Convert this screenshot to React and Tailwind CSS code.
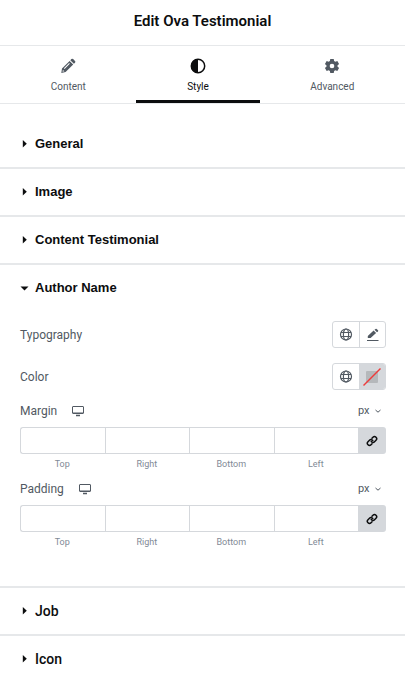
import React, { useState } from "react";

const PencilIcon = () => (
  <svg className="w-4 h-4" viewBox="0 0 16 16" fill="currentColor">
    <path
      fillRule="evenodd"
      d="M2 10.500 9.600 2.900l3.600 3.600-7.600 7.600-4.300.8zM4.600 10.900l5.200-5.200-.7-.7-5.200 5.200zM2.900 11.900l-.4 1.800 1.900-.4z"
    />
    <path d="M10.300 2.200 11.400 1.100a1.200 1.200 0 0 1 1.700 0l1.900 1.900a1.200 1.200 0 0 1 0 1.700l-1.100 1.100z" />
  </svg>
);

const SettingsIcon = () => (
  <svg className="w-4 h-4" viewBox="0 0 24 24" fill="currentColor">
    <path
      fillRule="evenodd"
      d="M9.400 1.500h5.200l.6 3.100 1.800 1 3-1 2.600 4.500-2.400 2v1.800l2.400 2-2.600 4.500-3-1-1.800 1-.6 3.100H9.400l-.6-3.100-1.800-1-3 1-2.600-4.500 2.400-2v-1.800l-2.400-2L4 4.600l3 1 1.800-1zM12 8.500a3.500 3.500 0 1 0 0 7 3.500 3.500 0 0 0 0-7z"
    />
  </svg>
);

const ContrastIcon = () => (
  <svg className="w-4 h-4" viewBox="0 0 16 16">
    <circle cx="8" cy="8" r="6.700" fill="none" stroke="currentColor" strokeWidth="1.500" />
    <path d="M8 1a7 7 0 0 0 0 14z" fill="currentColor" />
  </svg>
);

const GlobeIcon = () => (
  <svg className="w-3.5 h-3.5" viewBox="0 0 14 14" fill="none" stroke="currentColor" strokeWidth="1.200">
    <circle cx="7" cy="6.500" r="5.500" />
    <ellipse cx="7" cy="6.500" rx="2.600" ry="5.500" />
    <path d="M2 4.500h10M2 8.500h10" />
  </svg>
);

const EditIcon = () => (
  <svg className="w-3.5 h-3.5" viewBox="0 0 14 14" fill="currentColor">
    <path d="M1.800 8 7.600 2.600l2.500 2.500-5.500 5H1.800zM8.500 1.800l1-.9a.9.900 0 0 1 1.200 0l1.300 1.300a.9.900 0 0 1 0 1.200l-1 .9z" />
    <path d="M1 12h11.500v1H1z" />
  </svg>
);

const DesktopIcon = () => (
  <svg className="w-3 h-3" viewBox="0 0 12 12" fill="none" stroke="currentColor">
    <rect x=".5" y="1.500" width="11" height="7" rx=".5" />
    <path d="M1 8.200h10M4 10.500h4" strokeWidth="1.400" />
  </svg>
);

const LinkIcon = () => (
  <svg className="w-3 h-3" viewBox="0 0 24 24" fill="none" stroke="currentColor" strokeWidth="3" strokeLinecap="round" strokeLinejoin="round">
    <path d="M10.500 13a4.300 4.300 0 0 0 6.500.5l3-3a4.300 4.300 0 0 0-6.100-6.100l-2 2" />
    <path d="M13.500 11a4.300 4.300 0 0 0-6.500-.5l-3 3a4.300 4.300 0 0 0 6.100 6.100l2-2" />
  </svg>
);

const TABS = [
  { id: "content", label: "Content", icon: <PencilIcon /> },
  { id: "style", label: "Style", icon: <ContrastIcon /> },
  { id: "advanced", label: "Advanced", icon: <SettingsIcon /> },
];

const SIDES = ["Top", "Right", "Bottom", "Left"];

const Section = ({ title, open, onToggle, titleClass, children }) => (
  <section className="border-b-2 border-[#e6e8ea] last:border-b-0">
    <h2>
      <button
        type="button"
        onClick={onToggle}
        aria-expanded={open}
        className="flex w-full h-[46px] items-center gap-1.5 px-5 text-left text-[#0c0d0e] cursor-pointer"
      >
        <svg className="w-[9px] h-[9px]" viewBox="0 0 9 9" fill="currentColor">
          {open ? <path d="M.5 2.500h8l-4 4z" /> : <path d="M2.800 0v7.500l4-3.750z" />}
        </svg>
        <span className={titleClass}>{title}</span>
      </button>
    </h2>
    {open && children}
  </section>
);

const ControlRow = ({ label, action }) => (
  <div className="flex items-center justify-between">
    <span className="text-xs">{label}</span>
    <div className="flex h-[27px] rounded-[3px] border border-[#d5d8dc] overflow-hidden">
      <button type="button" aria-label={`${label} globals`} className="flex w-[26px] items-center justify-center cursor-pointer">
        <GlobeIcon />
      </button>
      {action}
    </div>
  </div>
);

const Dimensions = ({ label }) => {
  const [linked, setLinked] = useState(true);
  const [values, setValues] = useState({ Top: "", Right: "", Bottom: "", Left: "" });
  const name = label.toLowerCase();

  const handleChange = (side, value) => {
    if (linked) {
      setValues({ Top: value, Right: value, Bottom: value, Left: value });
    } else {
      setValues({ ...values, [side]: value });
    }
  };

  return (
    <div>
      <div className="flex h-4 items-center justify-between">
        <div className="flex items-center gap-[15px]">
          <span className="text-xs">{label}</span>
          <button type="button" aria-label={`${label} device`} className="cursor-pointer">
            <DesktopIcon />
          </button>
        </div>
        <div className="relative flex items-center mr-1">
          <select aria-label={`${label} unit`} className="w-6 appearance-none bg-transparent text-[11px] leading-4 outline-none">
            <option>px</option>
            <option>em</option>
            <option>%</option>
          </select>
          <svg className="absolute right-0 w-2 h-2 pointer-events-none" viewBox="0 0 8 8" fill="none" stroke="currentColor">
            <path d="M1.500 3 4 5.200 6.500 3" />
          </svg>
        </div>
      </div>

      <div className="mt-2 flex">
        {SIDES.map((side) => (
          <div key={side} className="flex-1 min-w-0 group">
            <input
              id={`${name}-${side}`}
              type="text"
              value={values[side]}
              onChange={(e) => handleChange(side, e.target.value)}
              className="block w-full h-[27px] border border-r-0 border-[#d5d8dc] px-2 text-center text-xs outline-none group-first:rounded-l-[3px]"
            />
            <label htmlFor={`${name}-${side}`} className="block mt-1 text-center text-[9px] leading-3 text-[#818a96]">
              {side}
            </label>
          </div>
        ))}
        <button
          type="button"
          aria-label="Link values together"
          aria-pressed={linked}
          onClick={() => setLinked(!linked)}
          className="flex w-7 h-[27px] items-center justify-center rounded-r-[3px] bg-[#d5d8dc] text-[#0c0d0e] cursor-pointer"
        >
          <LinkIcon />
        </button>
      </div>
    </div>
  );
};

const App = () => {
  const [activeTab, setActiveTab] = useState("style");
  const [openSection, setOpenSection] = useState("Author Name");

  const arial = "font-['Liberation_Sans',sans-serif] text-[13px] font-bold";
  const roboto = "font-['Roboto',sans-serif] text-[14px] font-medium";

  const sections = [
    { title: "General", titleClass: arial },
    { title: "Image", titleClass: arial },
    { title: "Content Testimonial", titleClass: arial },
    { title: "Author Name", titleClass: arial },
    { title: "Job", titleClass: roboto },
    { title: "Icon", titleClass: roboto },
  ];

  return (
    <div className="min-h-screen bg-white font-['Roboto',sans-serif] text-[#515962]">
      <header className="flex h-[46px] items-center justify-center border-b border-[#e6e8ea] pb-0.5">
        <h1 className="text-[15px] font-semibold text-[#0c0d0e]">Edit Ova Testimonial</h1>
      </header>

      <nav className="flex h-[58px] border-b border-[#e6e8ea]">
        {TABS.map((tab) => (
          <button
            key={tab.id}
            type="button"
            onClick={() => setActiveTab(tab.id)}
            className={`flex flex-auto flex-col items-center gap-[5px] border-b-3 pt-3 text-[10px] cursor-pointer ${
              activeTab === tab.id ? "border-[#0c0d0e] text-[#0c0d0e]" : "border-transparent"
            }`}
          >
            {tab.icon}
            <span>{tab.label}</span>
          </button>
        ))}
      </nav>

      <main className="pt-[17px]">
        {sections.map(({ title, titleClass }) => (
          <Section
            key={title}
            title={title}
            titleClass={titleClass}
            open={openSection === title}
            onToggle={() => setOpenSection(openSection === title ? null : title)}
          >
            {title === "Author Name" && (
              <div className="pl-5 pr-[19px] pt-2.5 pb-[38px]">
                <div className="flex flex-col gap-[15px]">
                  <ControlRow
                    label="Typography"
                    action={
                      <button type="button" aria-label="Edit typography" className="flex w-[26px] items-center justify-center border-l border-[#d5d8dc] cursor-pointer">
                        <EditIcon />
                      </button>
                    }
                  />
                  <ControlRow
                    label="Color"
                    action={
                      <button type="button" aria-label="Pick color" className="flex w-[26px] items-center justify-center bg-[#d5d8dc] cursor-pointer">
                        <svg className="w-5 h-5" viewBox="0 0 20 20">
                          <rect x="4" y="4" width="12" height="12" rx="1" fill="#b5b8bb" />
                          <path d="M1.500 18.500 18.500 1.500" stroke="#ee3b3b" strokeWidth="1.500" />
                        </svg>
                      </button>
                    }
                  />
                </div>
                <div className="mt-[13px] flex flex-col gap-[11px]">
                  <Dimensions label="Margin" />
                  <Dimensions label="Padding" />
                </div>
              </div>
            )}
          </Section>
        ))}
      </main>
    </div>
  );
};

export default App;
